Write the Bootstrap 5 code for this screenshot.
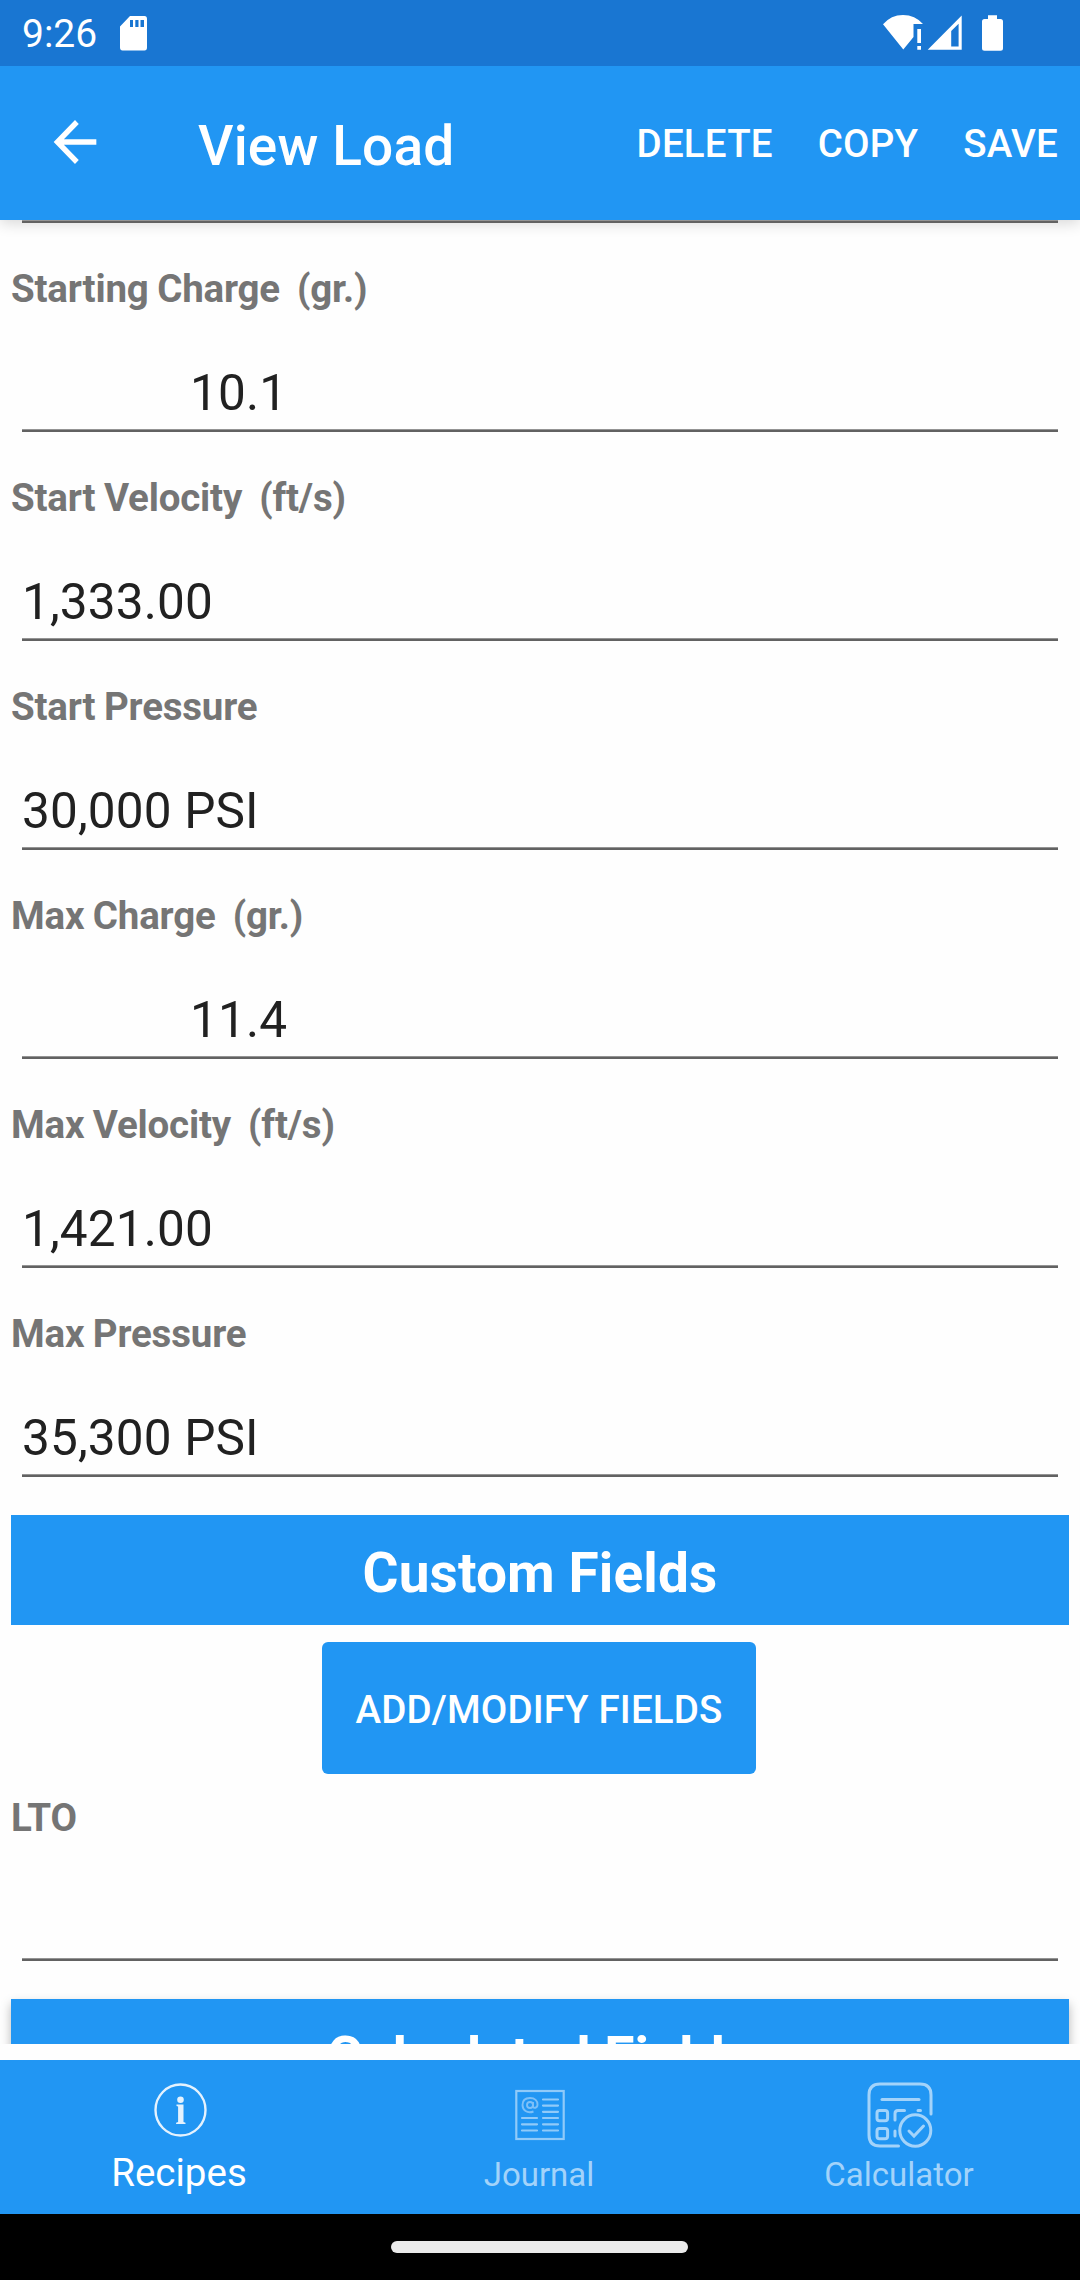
<!DOCTYPE html>
<html lang="en">
<head>
<meta charset="utf-8">
<meta name="viewport" content="width=device-width, initial-scale=1">
<title>View Load</title>
<link href="https://cdn.jsdelivr.net/npm/bootstrap@5.3.0/dist/css/bootstrap.min.css" rel="stylesheet">
<style>
:root{--app-blue:#2196f3;--app-dark:#1976d2}
body{font-family:Roboto,"Noto Sans",sans-serif;color:#212121;background:#fefefe}
svg{display:block;flex:none;overflow:visible}
.screen{width:1080px;height:2280px}
.statusbar{height:66px;background:var(--app-dark);color:#fff;padding:1px 77px 0 22px;font-size:39px;line-height:66px;z-index:3}
.sd-icon{margin-left:23px}
.appbar{height:154px;background:var(--app-blue);color:#fff;padding:0 22px 0 43px;box-shadow:0 3px 14px rgba(0,0,0,.16);--bs-navbar-padding-y:0}
.back-icon{margin-bottom:3px}
.app-title{font-size:55px;line-height:64px;font-weight:500;padding-top:5px;margin-left:91px;letter-spacing:.15px}
.actions{gap:45px}
.action{font-size:38.5px;line-height:45px;font-weight:500;color:#fff;text-decoration:none;letter-spacing:.2px;padding-top:1px}
.content-area{height:1824px;padding:0 11px}
.rule{height:3px;margin:0 11px;background:linear-gradient(#949494 0 1px,#626262 1px)}
.over-bar{z-index:2}
.field{height:209px;padding-top:43px}
.field-short{height:187px;padding-top:21px}
.field-label{font-size:38.5px;line-height:45px;font-weight:700;color:#757575;white-space:pre;letter-spacing:-.2px;word-spacing:-.8px}
.field-value{font-size:49.5px;line-height:58px;height:58px;margin:53px 11px 7px;letter-spacing:.15px}
.indented{padding-left:168px}
.section-head{height:110px;margin-top:38px;background:var(--app-blue);color:#fff;font-size:55px;font-weight:700;line-height:64px;padding-top:26px;letter-spacing:.1px}
.raised{box-shadow:0 5px 10px rgba(0,0,0,.28)}
.modify{width:434px;height:132px;margin:17px 0 0 311px;--bs-btn-bg:#2196f3;--bs-btn-color:#fff;--bs-btn-border-width:0;--bs-btn-border-radius:6px;--bs-btn-padding-x:0;--bs-btn-font-size:38.5px;--bs-btn-font-weight:500;padding-top:10px;letter-spacing:.15px}
.tabbar{height:154px;margin-top:16px;background:var(--app-blue);color:#fff}
.tab-item{color:#fff;width:360px;padding:17px 0 0;line-height:45px;font-size:38.5px}
.tab-item span{margin:7px 2px 0 0}
.tab-item.idle{font-size:33px;color:#a3d3fa}
.tab-item.idle span{margin-top:9px}
.gesture{height:66px;padding:27px 2px 0 0}
.pill{width:297px;height:12px;background:#eaeaea;border-radius:6px}
</style>
</head>
<body>
<div class="screen d-flex flex-column overflow-hidden">
  <div class="statusbar d-flex flex-shrink-0 align-items-start position-relative">
    <span>9:26</span>
    <svg class="sd-icon" width="28" height="66" viewBox="0 0 28 66" fill="#fff"><path fill-rule="evenodd" d="M10 15H24.500Q27 15 27 18V46.500Q27 49.500 24.500 49.500H2.500Q0 49.500 0 46.500V25.500ZM10 19V26H13V19ZM15.300 19V26H18.500V19ZM20.500 19V26H24V19Z"/></svg>
    <svg class="ms-auto" width="121" height="66" viewBox="882 1 121 66" fill="#fff">
      <path d="M883 24.300Q891 15 903 15Q915 15 923 24H913.500V37L903.300 49.500Z"/>
      <path d="M917.300 29H921V43H917.300ZM917.300 46H921V49.700H917.300Z"/>
      <path fill-rule="evenodd" d="M927.700 49.700L961.700 15.500V49.700ZM951.200 31V46.500H958.600V23.800Z"/>
      <path d="M988 15.200H997V19H1000.500Q1003 19 1003 21.500V48.300Q1003 50.800 1000.500 50.800H984.500Q982 50.800 982 48.300V21.500Q982 19 984.500 19H988Z"/>
    </svg>
  </div>
  <nav class="appbar navbar flex-nowrap justify-content-start flex-shrink-0 position-relative">
    <svg class="back-icon" width="64" height="66" viewBox="0 0 24 24" preserveAspectRatio="none" fill="#fff"><path d="M20 11H7.830l5.590-5.590L12 4l-8 8 8 8 1.410-1.410L7.830 13H20v-2z"/></svg>
    <span class="app-title">View Load</span>
    <div class="actions d-flex ms-auto">
      <a class="action">DELETE</a><a class="action">COPY</a><a class="action">SAVE</a>
    </div>
  </nav>
  <main class="content-area flex-shrink-0 overflow-hidden">
    <div class="rule position-relative over-bar"></div>
    <div class="field"><div class="field-label">Starting Charge  (gr.)</div><div class="field-value indented">10.1</div><div class="rule"></div></div>
    <div class="field"><div class="field-label">Start Velocity  (ft/s)</div><div class="field-value">1,333.00</div><div class="rule"></div></div>
    <div class="field"><div class="field-label">Start Pressure</div><div class="field-value">30,000 PSI</div><div class="rule"></div></div>
    <div class="field"><div class="field-label">Max Charge  (gr.)</div><div class="field-value indented">11.4</div><div class="rule"></div></div>
    <div class="field"><div class="field-label">Max Velocity  (ft/s)</div><div class="field-value">1,421.00</div><div class="rule"></div></div>
    <div class="field"><div class="field-label">Max Pressure</div><div class="field-value">35,300 PSI</div><div class="rule"></div></div>
    <div class="section-head text-center">Custom Fields</div>
    <button type="button" class="btn modify d-block">ADD/MODIFY FIELDS</button>
    <div class="field field-short"><div class="field-label">LTO</div><div class="field-value"></div><div class="rule"></div></div>
    <div class="section-head raised text-center">Calculated Fields</div>
  </main>
  <div class="tabbar d-flex flex-shrink-0">
    <a class="tab-item d-flex flex-column align-items-center text-decoration-none">
      <svg width="66" height="66" viewBox="147.500 2077 66 66"><ellipse cx="181" cy="2110" rx="25" ry="25.500" fill="none" stroke="#e4f2fe" stroke-width="2.400"/><g fill="#e4f2fe"><circle cx="181" cy="2099.700" r="3.300"/><path d="M177 2104.500H184V2122L186 2122.700V2124H176.600V2122.700L178.600 2122V2106.500L177 2106Z"/></g></svg>
      <span>Recipes</span>
    </a>
    <a class="tab-item idle d-flex flex-column align-items-center text-decoration-none">
      <svg width="66" height="66" viewBox="507 2077 66 66" fill="none" stroke="#90caf9" stroke-width="2.200"><rect x="516.300" y="2091" width="47.400" height="48"/><path stroke-linecap="round" d="M543 2099.500H558M543 2105.600H558M543 2111.800H558M543 2118H558M543 2124.300H558M543 2130.500H558M522 2118H537M522 2124.300H537M522 2130.500H537"/><g stroke-width="1.900" stroke="#7dc0f8"><path d="M533.500 2111.500C527 2114 522.500 2110 522.500 2105C522.500 2100 526 2098 530 2098C535 2098 537.500 2101 537.500 2104.500C537.500 2108 533.500 2109 533 2106.500V2102"/><circle cx="530" cy="2105" r="3"/></g></svg>
      <span>Journal</span>
    </a>
    <a class="tab-item idle d-flex flex-column align-items-center text-decoration-none">
      <svg width="66" height="66" viewBox="867 2077 66 66" fill="none" stroke="#a3d3fa" stroke-width="3" stroke-linecap="round"><path d="M931 2114V2095Q931 2084 920 2084H880Q869 2084 869 2095V2135Q869 2146 880 2146H898.500"/><path d="M882 2099.500H919"/><rect x="877" y="2110.500" width="10.600" height="10.300" rx="2.500"/><rect x="877" y="2128.500" width="10.600" height="10.300" rx="2.500"/><path d="M895 2120V2113.500Q895 2110.500 898 2110.500H904.500M918 2110.500H920.500M895 2131V2136"/><ellipse cx="915.300" cy="2130.500" rx="15.500" ry="15.700"/><path d="M909 2131L914 2136L923.500 2126"/></svg>
      <span>Calculator</span>
    </a>
  </div>
  <div class="gesture bg-black d-flex justify-content-center flex-shrink-0"><div class="pill"></div></div>
</div>
<script src="https://cdn.jsdelivr.net/npm/bootstrap@5.3.0/dist/js/bootstrap.bundle.min.js"></script>
</body>
</html>
